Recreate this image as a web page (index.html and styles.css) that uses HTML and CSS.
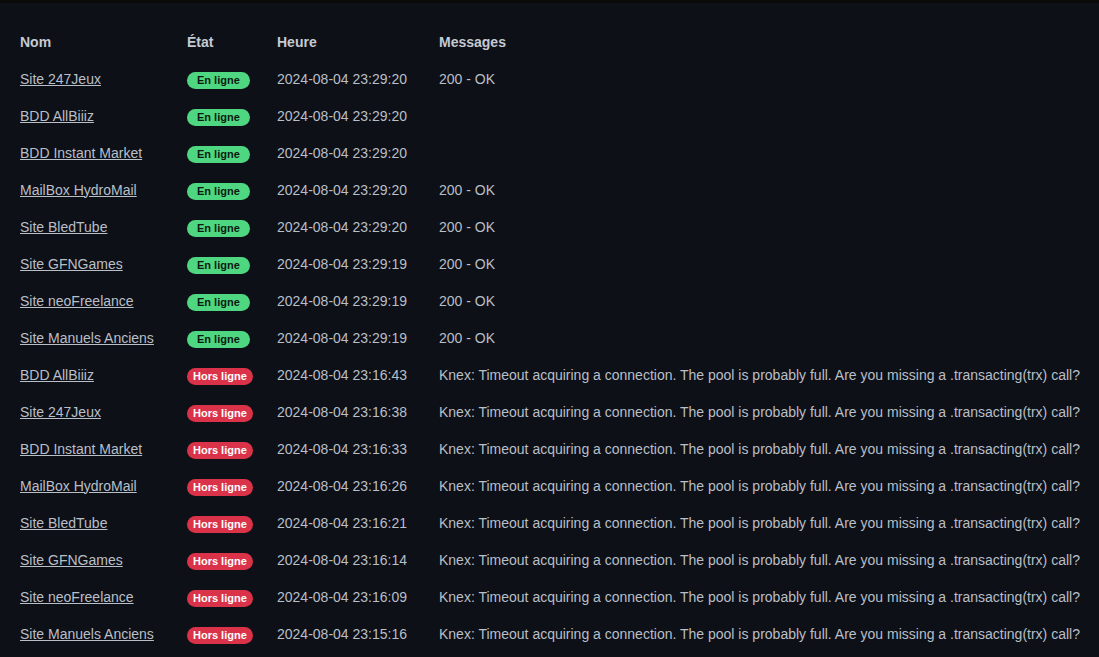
FILE: index.html
```html
<!DOCTYPE html>
<html lang="fr">
<head>
<meta charset="utf-8">
<title>Statut</title>
<link rel="stylesheet" href="styles.css">
</head>
<body>
<div class="topbar"></div>
<main class="wrap">
<table class="status">
<colgroup><col class="c-name"><col class="c-state"><col class="c-time"><col></colgroup>
<thead>
<tr><th>Nom</th><th>État</th><th>Heure</th><th>Messages</th></tr>
</thead>
<tbody>
<tr><td><a href="#">Site 247Jeux</a></td><td><span class="badge on">En ligne</span></td><td>2024-08-04 23:29:20</td><td>200 - OK</td></tr>
<tr><td><a href="#">BDD AllBiiiz</a></td><td><span class="badge on">En ligne</span></td><td>2024-08-04 23:29:20</td><td></td></tr>
<tr><td><a href="#">BDD Instant Market</a></td><td><span class="badge on">En ligne</span></td><td>2024-08-04 23:29:20</td><td></td></tr>
<tr><td><a href="#">MailBox HydroMail</a></td><td><span class="badge on">En ligne</span></td><td>2024-08-04 23:29:20</td><td>200 - OK</td></tr>
<tr><td><a href="#">Site BledTube</a></td><td><span class="badge on">En ligne</span></td><td>2024-08-04 23:29:20</td><td>200 - OK</td></tr>
<tr><td><a href="#">Site GFNGames</a></td><td><span class="badge on">En ligne</span></td><td>2024-08-04 23:29:19</td><td>200 - OK</td></tr>
<tr><td><a href="#">Site neoFreelance</a></td><td><span class="badge on">En ligne</span></td><td>2024-08-04 23:29:19</td><td>200 - OK</td></tr>
<tr><td><a href="#">Site Manuels Anciens</a></td><td><span class="badge on">En ligne</span></td><td>2024-08-04 23:29:19</td><td>200 - OK</td></tr>
<tr><td><a href="#">BDD AllBiiiz</a></td><td><span class="badge off">Hors ligne</span></td><td>2024-08-04 23:16:43</td><td>Knex: Timeout acquiring a connection. The pool is probably full. Are you missing a .transacting(trx) call?</td></tr>
<tr><td><a href="#">Site 247Jeux</a></td><td><span class="badge off">Hors ligne</span></td><td>2024-08-04 23:16:38</td><td>Knex: Timeout acquiring a connection. The pool is probably full. Are you missing a .transacting(trx) call?</td></tr>
<tr><td><a href="#">BDD Instant Market</a></td><td><span class="badge off">Hors ligne</span></td><td>2024-08-04 23:16:33</td><td>Knex: Timeout acquiring a connection. The pool is probably full. Are you missing a .transacting(trx) call?</td></tr>
<tr><td><a href="#">MailBox HydroMail</a></td><td><span class="badge off">Hors ligne</span></td><td>2024-08-04 23:16:26</td><td>Knex: Timeout acquiring a connection. The pool is probably full. Are you missing a .transacting(trx) call?</td></tr>
<tr><td><a href="#">Site BledTube</a></td><td><span class="badge off">Hors ligne</span></td><td>2024-08-04 23:16:21</td><td>Knex: Timeout acquiring a connection. The pool is probably full. Are you missing a .transacting(trx) call?</td></tr>
<tr><td><a href="#">Site GFNGames</a></td><td><span class="badge off">Hors ligne</span></td><td>2024-08-04 23:16:14</td><td>Knex: Timeout acquiring a connection. The pool is probably full. Are you missing a .transacting(trx) call?</td></tr>
<tr><td><a href="#">Site neoFreelance</a></td><td><span class="badge off">Hors ligne</span></td><td>2024-08-04 23:16:09</td><td>Knex: Timeout acquiring a connection. The pool is probably full. Are you missing a .transacting(trx) call?</td></tr>
<tr><td><a href="#">Site Manuels Anciens</a></td><td><span class="badge off">Hors ligne</span></td><td>2024-08-04 23:15:16</td><td>Knex: Timeout acquiring a connection. The pool is probably full. Are you missing a .transacting(trx) call?</td></tr>
</tbody>
</table>
</main>
</body>
</html>
```

FILE: styles.css
```css
html, body {
  margin: 0;
  padding: 0;
  background: #0d1017;
  height: 100%;
  overflow: hidden;
}
body {
  font-family: "Liberation Sans", Arial, sans-serif;
  font-size: 14px;
  color: #b9bfc7;
}
.topbar {
  height: 3px;
  background: #0a0a0b;
}
.wrap {
  padding: 24px 0 0 20px;
}
.status {
  border-collapse: collapse;
  table-layout: fixed;
  width: 1079px;
}
.c-name { width: 167px; }
.c-state { width: 90px; }
.c-time { width: 162px; }
.status th, .status td {
  padding: 0;
  height: 37px;
  text-align: left;
  vertical-align: middle;
  white-space: nowrap;
}
.status thead th {
  font-weight: bold;
  color: #c5cad3;
  height: 33px;
  box-sizing: border-box;
  padding-top: 7px;
  line-height: 16px;
  vertical-align: top;
}
.status a {
  color: #b9bfc7;
  text-decoration: underline;
}
.badge {
  display: inline-block;
  font-size: 11px;
  font-weight: bold;
  line-height: 17px;
  height: 17px;
  padding: 0 6px;
  border-radius: 9px;
  position: relative;
  top: 1px;
}
.badge.on {
  background: #4fd680;
  color: #0b1a10;
  padding: 0 10px;
}
.badge.off {
  background: #da3349;
  color: #ffffff;
}
```
